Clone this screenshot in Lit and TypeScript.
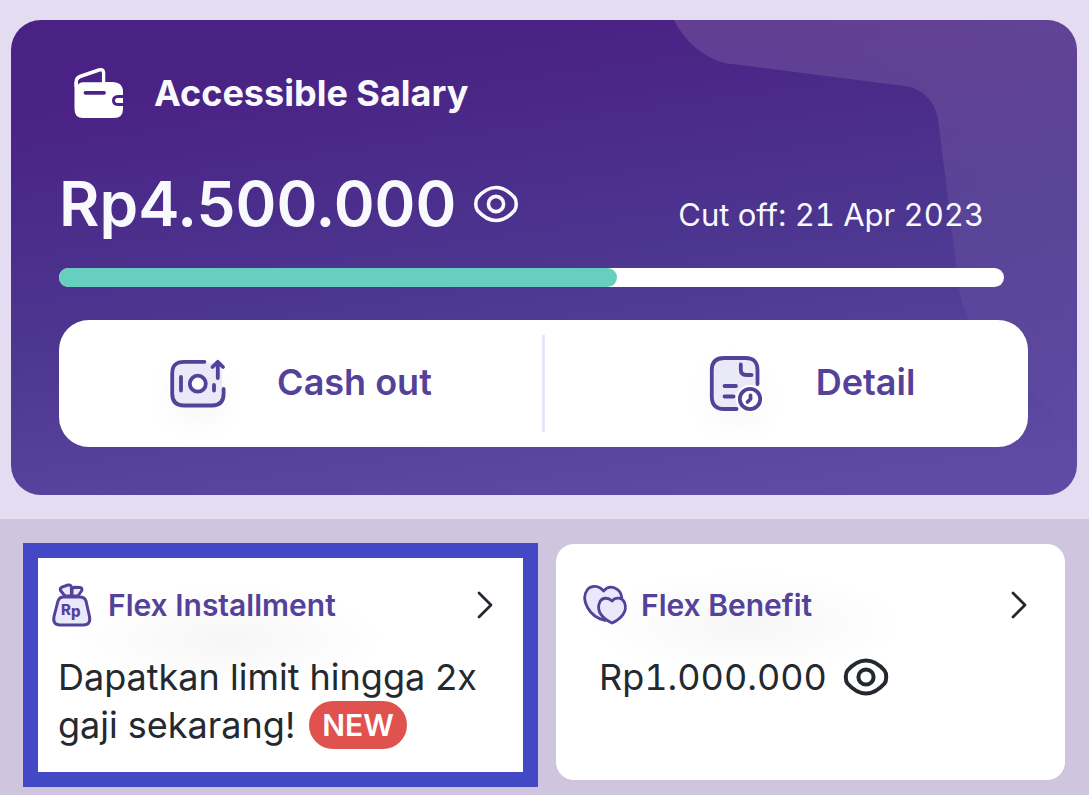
import { LitElement, html, css, svg } from "lit";
import { customElement, property } from "lit/decorators.js";

const walletIcon = svg`
  <svg class="icon" width="50" height="50" viewBox="0 0 50 50" fill="none" aria-hidden="true">
    <path d="M10 14H38Q49 14 49 24V27H45Q38 27 38 32.500Q38 38 45 38H49V41Q49 50 40 50H9Q0.500 50 0.500 41V14Z" fill="#fff"/>
    <path d="M2.200 19V14Q2.200 10 6 8.500L25 2Q29.500 0.500 29.500 5V17" stroke="#fff" stroke-width="3.500"/>
    <path d="M4 16.500V14.500Q4 11.500 7 10.500L25.500 4.200Q27.800 3.500 27.800 6V14.200H9Q6 14.200 4 16.500Z" fill="#4a2484"/>
    <path d="M11.500 24.800H30" stroke="#4a2484" stroke-width="3.800" stroke-linecap="round"/>
    <path d="M49 30H43.500Q41 30 41 32.500Q41 35 43.500 35H49Z" fill="#fff"/>
  </svg>`;

const eyeIcon = (width: number) => svg`
  <svg class="icon" width="46" height="38" viewBox="0 0 46 38" fill="none" stroke="currentColor" stroke-width=${width} aria-hidden="true">
    <path d="M23 2.500C32 2.500 37.500 8 41.500 12.500C43.800 15.200 43.800 22.800 41.500 25.500C37.500 30 32 35.500 23 35.500C14 35.500 8.500 30 4.500 25.500C2.200 22.800 2.200 15.200 4.500 12.500C8.500 8 14 2.500 23 2.500Z"/>
    <circle cx="23" cy="19" r="7.600"/>
  </svg>`;

const cashIcon = svg`
  <svg class="icon" width="58" height="58" viewBox="0 0 58 58" fill="none" aria-hidden="true">
    <rect x="4" y="10" width="49" height="42" rx="10" fill="#e9e9f8"/>
    <circle cx="29" cy="31" r="8" fill="#fff"/>
    <g stroke="#54429a" stroke-width="3.800" stroke-linecap="round" stroke-linejoin="round">
      <path d="M35.500 8.800H15Q3.200 8.800 3.200 20.600V40.500Q3.200 52.500 15 52.500H43Q54.600 52.500 54.600 40.500V36"/>
      <circle cx="28.800" cy="30.700" r="8"/>
      <path d="M12 24V37.500M45 32V37.500M48.800 25V9.500M43.500 14L48.800 8.800L54 14"/>
    </g>
  </svg>`;

const detailIcon = svg`
  <svg class="icon" width="58" height="58" viewBox="0 0 58 58" fill="none" aria-hidden="true">
    <rect x="4" y="5" width="46" height="51" rx="11" fill="#e9e9f8"/>
    <circle cx="42" cy="46" r="14" fill="#fff"/>
    <g stroke="#54429a" stroke-width="3.800" stroke-linecap="round" stroke-linejoin="round">
      <path d="M49.500 31V17Q49.500 5 37.500 5H16Q3.800 5 3.800 17V43.500Q3.800 56 16 56H28.500"/>
      <path d="M32.800 11.500V16.500Q32.800 22 38.300 22H43.500M16.500 33H28M16.500 43.500H25.500"/>
      <circle cx="42" cy="46" r="10.200"/>
      <path d="M42.500 42.500V46L39.500 49"/>
    </g>
  </svg>`;

const bagIcon = svg`
  <svg class="icon" width="42" height="44" viewBox="0 0 42 44" fill="#eae8fb" stroke="#54429a" stroke-width="3" stroke-linejoin="round" stroke-linecap="round" aria-hidden="true">
    <path d="M13 13L8.500 7.500Q7.600 5.500 9.800 4.200L16 2Q19 1.400 19.400 4V13Z"/>
    <path d="M20 13V6.500Q20.500 4.500 23 4.200L28 4.500Q30.600 5 29.800 7.500L26 13Z"/>
    <path d="M11 14H28Q32.500 14 34 18L37.500 33.500Q39 42 31.500 42H8Q0.500 42 2 33.500L6 18Q7.500 14 11 14Z"/>
    <text class="bag-text" x="9" y="32" fill="#54429a" stroke="none">R<tspan dy="2">p</tspan></text>
  </svg>`;

const heartsIcon = svg`
  <svg class="icon" width="44" height="44" viewBox="0 0 44 44" fill="#eae8fb" stroke="#54429a" stroke-width="2.800" stroke-linejoin="round" aria-hidden="true">
    <path d="M20.500 8C16 2 8 2 4.500 6.500C0 12.500 1.500 19 4.500 24.500C8 31 14 35.500 22 37.500C31 34 39.500 24 38.800 15C38 5 27 0.500 20.500 8Z"/>
    <path d="M29 18C25 14 19.500 14.500 17 18.500C12.500 28 19.500 35.500 29 40C38 36 45 28.500 41.500 19.500C39 14.500 33 13.500 29 18Z"/>
  </svg>`;

const chevronIcon = svg`
  <svg class="icon" width="16" height="28" viewBox="0 0 16 28" fill="none" stroke="#24292f" stroke-width="2.800" stroke-linecap="round" stroke-linejoin="round" aria-hidden="true">
    <path d="M2 2L14 14L2 26"/>
  </svg>`;

const shared = css`
  :host { display: block; font-family: Inter, "Noto Sans", sans-serif; }
  * { box-sizing: border-box; }
  h2, p { margin: 0; }
  button { font: inherit; color: inherit; background: none; border: 0; padding: 0; margin: 0; cursor: pointer; }
  .icon { display: block; flex: none; overflow: visible; }
`;

@customElement("salary-card")
class SalaryCard extends LitElement {
  @property() amount = "";
  @property() cutoff = "";
  @property({ type: Number }) percent = 0;

  static styles = [shared, css`
    .card {
      position: relative;
      overflow: hidden;
      padding: 48px 49px 48px 48px;
      border-radius: 30px;
      color: #f8f9fd;
      background: linear-gradient(172deg, #4a2184 12%, #4c3690 52%, #5f4ba4 94%);
    }
    .wave { position: absolute; top: 0; right: 0; }
    .content { position: relative; }
    .head { display: flex; align-items: center; gap: 30px; height: 50px; padding-left: 15px; }
    .title { font-size: 36px; line-height: 48px; font-weight: 700; }
    .balance { display: flex; align-items: baseline; justify-content: space-between; margin-top: 48px; padding-right: 44px; }
    .sum { display: flex; align-items: center; gap: 17px; }
    .amount { font-size: 62px; line-height: 76px; font-weight: 600; }
    .cutoff { font-size: 31px; line-height: 40px; font-variant-numeric: tabular-nums; }
    .bar {
      display: block;
      appearance: none;
      width: calc(100% - 24px);
      height: 19px;
      margin-top: 26px;
      border: 0;
      border-radius: 10px;
      overflow: hidden;
      background: #fff;
    }
    .bar::-webkit-progress-bar { background: #fff; }
    .bar::-webkit-progress-value { background: #66cfbd; border-radius: 0 10px 10px 0; }
    .actions {
      display: grid;
      grid-template-columns: 1fr 3px 1fr;
      margin-top: 33px;
      height: 127px;
      border-radius: 30px;
      background: #fff;
      color: #54429a;
      font-size: 36px;
      font-weight: 600;
    }
    .action { display: flex; align-items: center; justify-content: center; gap: 50px; padding-bottom: 3px; }
    .action .icon { filter: drop-shadow(0 12px 12px rgba(0, 0, 0, 0.03)); }
    .action.shifted { padding-left: 50px; }
    .divider { margin: 15px 0; background: #e6e4f8; }
  `];

  render() {
    return html`
      <section class="card">
        <svg class="wave" width="403" height="476" viewBox="0 0 403 476" aria-hidden="true">
          <defs>
            <linearGradient id="sheen" x1="0" y1="0" x2="0" y2="1">
              <stop offset="0" stop-color="#fffaf0" stop-opacity="0.130"/>
              <stop offset="0.700" stop-color="#fffaf0" stop-opacity="0.040"/>
              <stop offset="1" stop-color="#fffaf0" stop-opacity="0"/>
            </linearGradient>
          </defs>
          <path fill="url(#sheen)" d="M0 0C12 24 35 42 58 44L230 66C248 68 261 81 264 99L284 260Q287 293 304 312L403 420V0Z"/>
        </svg>
        <div class="content">
          <div class="head">${walletIcon}<h2 class="title">Accessible Salary</h2></div>
          <div class="balance">
            <div class="sum">
              <span class="amount">${this.amount}</span>
              <button aria-label="Toggle balance">${eyeIcon(3.6)}</button>
            </div>
            <span class="cutoff">Cut off: ${this.cutoff}</span>
          </div>
          <progress class="bar" max="100" value=${this.percent} aria-label="Accessible Salary"></progress>
          <div class="actions">
            <button class="action">${cashIcon}<span>Cash out</span></button>
            <span class="divider"></span>
            <button class="action shifted">${detailIcon}<span>Detail</span></button>
          </div>
        </div>
      </section>`;
  }
}

@customElement("app-root")
class AppRoot extends LitElement {
  static styles = [shared, css`
    :host { min-height: 100vh; background: #cfc5df; }
    .top { padding: 20px 12px 24px 11px; background: #e4dcf0; }
    .products {
      display: grid;
      grid-template-columns: 515fr 509fr;
      gap: 18px;
      padding: 24px 24px 8px 23px;
      color: #24292f;
      font-size: 36px;
      line-height: 48px;
    }
    .product { background: radial-gradient(ellipse 160px 54px at 190px 80px, rgba(0, 0, 0, 0.035), transparent) #fff; }
    .installment { border: 15px solid #4348c5; padding: 25px 30px 23px 14px; }
    .benefit { border-radius: 18px; margin: 1px 0 7px; padding: 39px 38px 24px 27px; }
    .link { display: flex; align-items: center; gap: 14px; height: 44px; color: inherit; text-decoration: none; }
    .name {
      flex: 1;
      color: #54429a;
      font-size: 30px;
      font-weight: 600;
    }
    .bag-text { font: 800 15px Inter, sans-serif; }
    .text { margin: 26px 0 0 6px; }
    .value { display: flex; align-items: center; gap: 16px; margin: 26px 0 0 16px; font-variant-numeric: tabular-nums; }
    .line { display: flex; gap: 14px; white-space: nowrap; }
    .badge {
      padding: 0 13px;
      border-radius: 24px;
      background: #df524d;
      color: #fff;
      font-size: 30px;
      font-weight: 600;
    }
  `];

  render() {
    return html`
      <main>
        <div class="top">
          <salary-card amount="Rp4.500.000" cutoff="21 Apr 2023" percent="59"></salary-card>
        </div>
        <div class="products">
          <article class="product installment">
            <a class="link" href="#installment">${bagIcon}<span class="name">Flex Installment</span>${chevronIcon}</a>
            <p class="text">
              <span class="line">Dapatkan limit hingga 2x</span>
              <span class="line">gaji sekarang! <span class="badge">NEW</span></span>
            </p>
          </article>
          <article class="product benefit">
            <a class="link" href="#benefit">${heartsIcon}<span class="name">Flex Benefit</span>${chevronIcon}</a>
            <div class="value">
              <span>Rp1.000.000</span>
              <button aria-label="Toggle benefit balance">${eyeIcon(4)}</button>
            </div>
          </article>
        </div>
      </main>`;
  }
}
